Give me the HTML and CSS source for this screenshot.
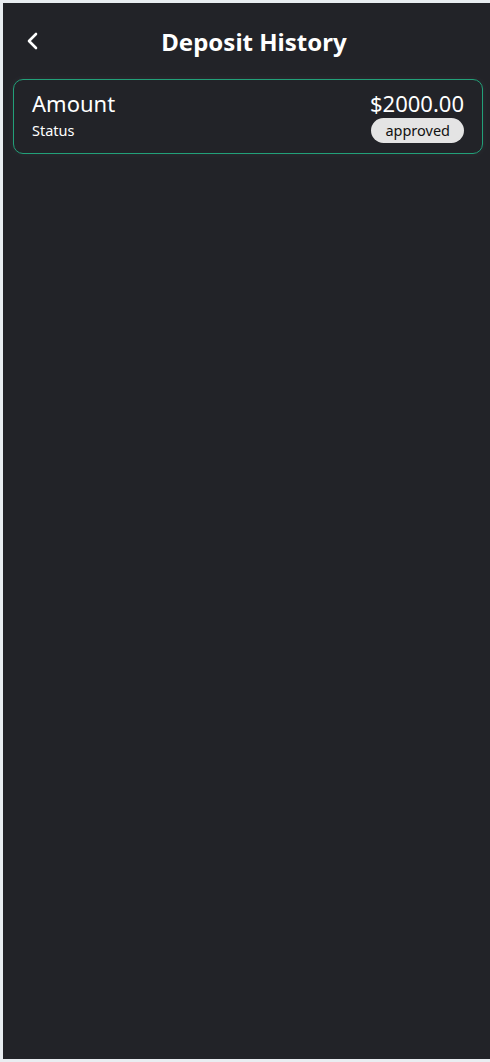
FILE: index.html
```html
<!DOCTYPE html>
<html lang="en">
<head>
<meta charset="utf-8">
<title>Deposit History</title>
<link rel="stylesheet" href="styles.css">
</head>
<body>
<div class="app">
  <header class="topbar">
    <button class="back" aria-label="Back">
      <svg width="14" height="20" viewBox="0 0 14 20"><path d="M10 3 L3 10 L10 17" fill="none" stroke="#fff" stroke-width="2.6" stroke-linecap="round" stroke-linejoin="round"/></svg>
    </button>
    <h1 class="title">Deposit History</h1>
    <span class="spacer"></span>
  </header>
  <main class="list">
    <div class="card">
      <div class="col">
        <div class="amount-label">Amount</div>
        <div class="status-label">Status</div>
      </div>
      <div class="col right">
        <div class="amount">$2000.00</div>
        <span class="badge">approved</span>
      </div>
    </div>
  </main>
</div>
</body>
</html>
```
FILE: styles.css
```css
html, body {
  margin: 0;
  overflow: hidden;
}
body {
  background: #e9edf1;
  padding: 3px 0 3px 3px;
  font-family: "Noto Sans", "Open Sans", sans-serif;
  color: #fff;
}
.app {
  width: 490px;
  height: 1056px;
  background: #222328;
}
.topbar {
  display: flex;
  align-items: center;
  height: 76px;
  padding: 0 23px;
  box-sizing: border-box;
}
.back {
  background: none;
  border: 0;
  padding: 0;
  width: 40px;
  display: flex;
  align-items: center;
  cursor: pointer;
}
.spacer { width: 28px; }
.title {
  flex: 1;
  text-align: center;
  margin: 0;
  font-size: 24px;
  font-weight: 700;
}
.list {
  padding: 0 10px;
}
.card {
  display: flex;
  justify-content: space-between;
  border: 1px solid #22a079;
  border-radius: 10px;
  padding: 9px 18px 10px 18px;
  box-shadow: 0 0 8px rgba(255,255,255,0.05);
}
.col {
  display: flex;
  flex-direction: column;
}
.right { align-items: flex-end; }
.amount-label, .amount {
  font-size: 22px;
  line-height: 29px;
}
.status-label {
  font-size: 14.5px;
  line-height: 25px;
}
.badge {
  background: #e4e4e4;
  color: #111;
  font-size: 14.5px;
  line-height: 25px;
  padding: 0 14px;
  border-radius: 13px;
}
```
